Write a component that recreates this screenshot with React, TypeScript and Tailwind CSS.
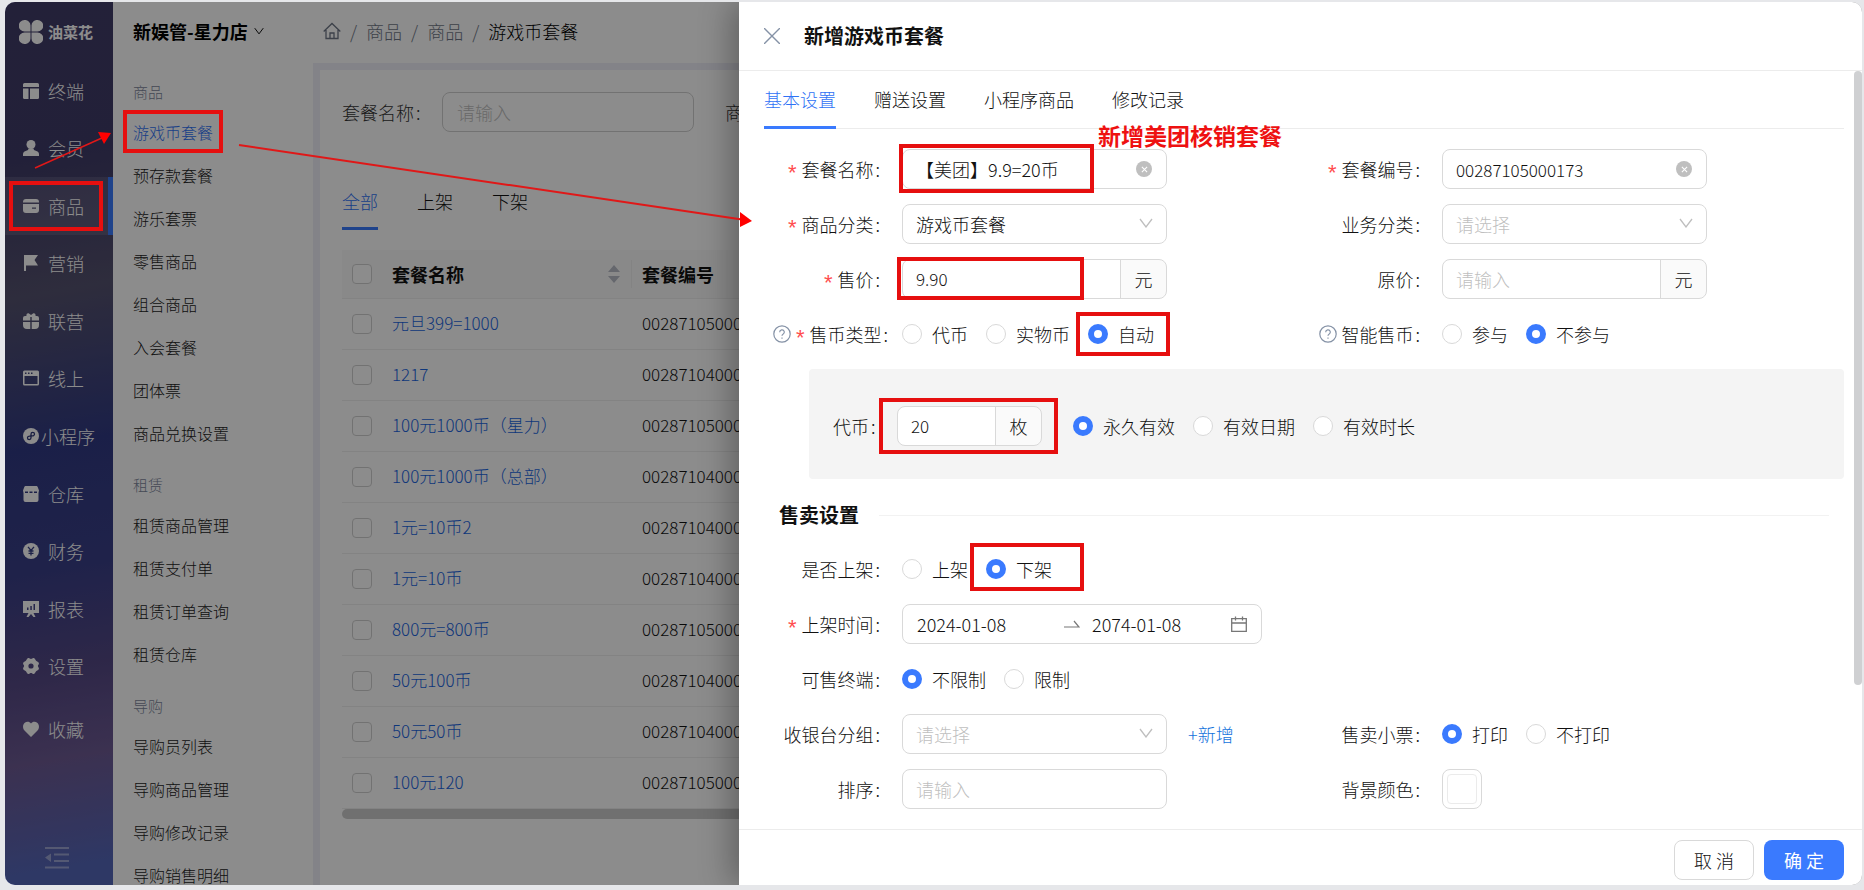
import type React from "react"
import { useState } from "react"

interface RadioGroupProps {
  name: string
  options: string[]
  selected: string
  marked?: string
  frameClass?: string
}

interface FieldProps {
  label: string
  htmlFor?: string
  required?: boolean
  help?: boolean
  children: React.ReactNode
}

const navItems = ["终端", "会员", "商品", "营销", "联营", "线上", "小程序", "仓库", "财务", "报表", "设置"]

const menuGroups = [
  {
    title: "商品",
    items: ["游戏币套餐", "预存款套餐", "游乐套票", "零售商品", "组合商品", "入会套餐", "团体票", "商品兑换设置"],
  },
  { title: "租赁", items: ["租赁商品管理", "租赁支付单", "租赁订单查询", "租赁仓库"] },
  { title: "导购", items: ["导购员列表", "导购商品管理", "导购修改记录", "导购销售明细"] },
]

const packages = [
  { name: "元旦399=1000", code: "00287105000172" },
  { name: "1217", code: "00287104000171" },
  { name: "100元1000币（星力）", code: "00287105000170" },
  { name: "100元1000币（总部）", code: "00287104000169" },
  { name: "1元=10币2", code: "00287104000168" },
  { name: "1元=10币", code: "00287104000167" },
  { name: "800元=800币", code: "00287105000166" },
  { name: "50元100币", code: "00287104000165" },
  { name: "50元50币", code: "00287104000164" },
  { name: "100元120", code: "00287105000163" },
]

const navIcons: Record<string, React.ReactNode> = {
  终端: (
    <>
      <path d="M1.5 0h13A1.5 1.5 0 0 1 16 1.500V4H0V1.500A1.500 1.500 0 0 1 1.500 0Z" />
      <path d="M0 5.500h5.500V16h-4A1.500 1.500 0 0 1 0 14.500Z" />
      <path d="M7 5.500h9v9a1.500 1.500 0 0 1-1.500 1.500H7Z" />
    </>
  ),
  会员: (
    <>
      <circle cx="8" cy="4.500" r="4.500" />
      <path d="M5.500 8.500h5l.5 1.500 3.500 1.500c1 .5 1.500 1.500 1.500 3v1.500H0v-1.500c0-1.500.5-2.500 1.500-3L5 10Z" />
    </>
  ),
  商品: (
    <>
      <path d="M3 1h10a3 3 0 0 1 3 3v.5H0V4a3 3 0 0 1 3-3Z" />
      <path d="M0 6h16v6a3 3 0 0 1-3 3H3a3 3 0 0 1-3-3Zm9 3.500v1.300h4V9.500Z" fillRule="evenodd" />
    </>
  ),
  营销: <path d="M1 0h14l-3.500 5L15 10.500H3V16H1Z" />,
  联营: (
    <>
      <path d="M3.500 3C3 1 4.500-.500 6 .5L8 2l2-1.500c1.500-1 3 .5 2.500 2.500H14a2 2 0 0 1 2 2v2.500H8.700V4H7.300v3.500H0V5a2 2 0 0 1 2-2Z" />
      <path d="M0 9h7.300v7H4a4 4 0 0 1-4-4ZM8.700 9H16v3a4 4 0 0 1-4 4H8.700Z" />
    </>
  ),
  线上: (
    <path
      fillRule="evenodd"
      d="M1.500.5h13A1.500 1.500 0 0 1 16 2v12a1.500 1.500 0 0 1-1.500 1.500h-13A1.500 1.500 0 0 1 0 14V2A1.500 1.500 0 0 1 1.500.5Zm0 5.500v8h13V6ZM2 2.500V4h1.500V2.500Zm3 0V4h1.500V2.500Zm3 0V4h1.500V2.500Z"
    />
  ),
  小程序: (
    <>
      <circle cx="8" cy="8" r="8" />
      <path
        d="M7.200 8.200c-1.600-.2-2.700.6-2.700 1.700 0 1 .8 1.700 1.800 1.700 1.100 0 1.700-.8 1.700-1.800V6.200c0-1 .6-1.800 1.700-1.800 1 0 1.800.7 1.800 1.700 0 1.100-1.100 1.900-2.700 1.700"
        fill="none"
        stroke="#2f3878"
        strokeWidth="1.300"
        strokeLinecap="round"
      />
    </>
  ),
  仓库: (
    <path
      fillRule="evenodd"
      d="M3 0h10c1 0 1.500.5 1.800 1.200L16 4.500 15.500 7v7a2 2 0 0 1-2 2h-11a2 2 0 0 1-2-2V7L0 4.500l1.200-3.300C1.500.5 2 0 3 0ZM2 5.500v1.400h3V5.500Zm4.500 0v1.400h3V5.500Zm4.500 0v1.400h3V5.500Z"
    />
  ),
  财务: (
    <>
      <circle cx="8" cy="8" r="8" />
      <path d="M5 3.800 8 7.500l3-3.700M8 7.500v5M5.500 8h5M5.500 10.300h5" fill="none" stroke="#353f84" strokeWidth="1.300" />
    </>
  ),
  报表: (
    <>
      <path fillRule="evenodd" d="M0 0h16v12H0ZM4 6.500V9h1.500V6.500ZM7.300 5v4h1.500V5ZM10.500 3v6H12V3Z" />
      <path d="M5.500 12 3.500 16h2L8 13l2.500 3h2l-2-4Z" />
    </>
  ),
  设置: (
    <path
      fillRule="evenodd"
      d="M5.200 0c1.100-.2 1.700.9 2.800.9S9.700-.2 10.800 0c1.400.4 1.500 1.800 2.300 2.700.8.800 2.500 1 2.800 2.500.3 1.200-1 1.800-1 2.800s1.300 1.600 1 2.800c-.3 1.500-2 1.700-2.800 2.500-.8.900-.9 2.300-2.300 2.700-1.100.2-1.700-.9-2.800-.9s-1.700 1.100-2.800.9c-1.400-.4-1.500-1.800-2.300-2.700C2.100 12.500.4 12.300.1 10.800c-.3-1.200 1-1.800 1-2.800S-.2 6.400.1 5.200C.4 3.700 2.100 3.500 2.900 2.700 3.700 1.800 3.800.4 5.200 0ZM8 5.400a2.600 2.600 0 1 0 0 5.200 2.600 2.600 0 0 0 0-5.200Z"
    />
  ),
  收藏: <path d="M8 16 1.500 9.500C-.5 7.300-.4 3.800 1.500 2 3.500 0 6.500.2 8 2.500 9.500.2 12.500 0 14.500 2c1.900 1.800 2 5.300 0 7.500Z" />,
}

function NavIcon({ name }: { name: string }) {
  return (
    <svg viewBox="0 0 16 16" className="size-4 shrink-0" fill="currentColor" aria-hidden="true">
      {navIcons[name]}
    </svg>
  )
}

function ChevronDown({ className }: { className: string }) {
  return (
    <svg viewBox="0 0 14 10" className={className} fill="none" stroke="currentColor" strokeWidth="1.3" aria-hidden="true">
      <path d="M1 1l6 8 6-8" />
    </svg>
  )
}

// Red frame that sits above the mask and the drawer
function Frame({ className }: { className: string }) {
  return <span className={`pointer-events-none absolute z-40 border-4 border-[#e60f0f] ${className}`} />
}

function RadioGroup({ name, options, selected, marked, frameClass }: RadioGroupProps) {
  const [value, setValue] = useState(selected)

  return (
    <div className="flex items-center gap-[18px]">
      {options.map((option) => (
        <label key={option} className="relative flex items-center gap-[10px] whitespace-nowrap">
          <input
            type="radio"
            name={name}
            checked={value === option}
            onChange={() => setValue(option)}
            className="size-5 shrink-0 appearance-none rounded-full border border-[#d9d9d9] bg-white checked:border-[6px] checked:border-[#3a7afe]"
          />
          {option}
          {marked === option && <Frame className={frameClass ?? ""} />}
        </label>
      ))}
    </div>
  )
}

function Field({ label, htmlFor, required, help, children }: FieldProps) {
  return (
    <div className="flex h-10 items-center">
      <div className={`flex w-[138px] shrink-0 items-center justify-end gap-[5px] ${help && required ? "pr-[14px]" : "pr-[22px]"}`}>
        {help && (
          <svg viewBox="0 0 18 18" className="size-[18px] shrink-0 text-[#8592a6]" fill="none" stroke="currentColor" strokeWidth="1.2" aria-hidden="true">
            <circle cx="9" cy="9" r="8.2" />
            <path d="M6.700 7.200a2.300 2.300 0 1 1 3.300 2c-.7.4-1 .8-1 1.600M9 12.500v1.200" />
          </svg>
        )}
        {required && <span className="pt-2 font-['Liberation_Sans'] text-[22px] leading-5 text-[#ff4d4f]">*</span>}
        <label htmlFor={htmlFor} className="whitespace-nowrap">
          {label}
          <span className="ml-[2px]">:</span>
        </label>
      </div>
      {children}
    </div>
  )
}

function TextInput({ id, value, className }: { id: string; value: string; className?: string }) {
  return (
    <div className="relative w-[265px]">
      <input
        id={id}
        defaultValue={value}
        className={`h-10 w-full rounded-lg border border-[#d9d9d9] bg-white pl-[13px] pr-9 ${className ?? ""}`}
      />
      <button aria-label="清除" className="absolute right-[15px] top-3 flex size-4 items-center justify-center rounded-full bg-[#bfbfbf] text-white">
        <svg viewBox="0 0 8 8" className="size-[7px]" stroke="currentColor" strokeWidth="1.2">
          <path d="M1 1l6 6M7 1L1 7" />
        </svg>
      </button>
    </div>
  )
}

function SelectInput({ id, value, placeholder }: { id: string; value?: string; placeholder?: boolean }) {
  return (
    <div className="relative w-[265px]">
      <select
        id={id}
        className={`h-10 w-full appearance-none rounded-lg border border-[#d9d9d9] bg-white px-[13px] ${
          placeholder ? "text-[#bfbfbf]" : ""
        }`}
      >
        <option>{value ?? "请选择"}</option>
      </select>
      <ChevronDown className="pointer-events-none absolute right-[14px] top-[14px] h-[10px] w-[14px] text-[#bfbfbf]" />
    </div>
  )
}

function UnitInput({ id, value, unit, className }: { id: string; value?: string; unit: string; className: string }) {
  return (
    <div className={`flex h-10 overflow-hidden rounded-lg border border-[#d9d9d9] bg-white ${className}`}>
      <input
        id={id}
        defaultValue={value}
        placeholder="请输入"
        className={`min-w-0 flex-1 pl-[13px] placeholder:text-[#bfbfbf] ${value ? "text-[17px]" : ""}`}
      />
      <span className="flex w-[46px] items-center justify-center border-l border-[#d9d9d9] bg-black/2">{unit}</span>
    </div>
  )
}

function Sidebar() {
  return (
    <aside className="flex w-[108px] shrink-0 flex-col bg-[linear-gradient(170deg,#413c69_0%,#3f3b68_18%,#55526f_33%,#313a83_50%,#3a3f88_64%,#544884_75%,#6d5a93_85%,#5566b8_97%)] text-white">
      <div className="flex h-[60px] items-center gap-[5px] pl-[14px]">
        <svg viewBox="0 0 24 24" className="size-6" fill="currentColor" aria-hidden="true">
          <path d="M5.500 0a5.500 5.500 0 0 1 6 5.500v6h-6a5.700 5.700 0 1 1 0-11.500Z" />
          <path d="M18.500 0a5.500 5.500 0 0 0-6 5.500v6h6a5.700 5.700 0 1 0 0-11.500Z" />
          <path d="M5.500 24a5.500 5.500 0 0 0 6-5.500v-6h-6a5.700 5.700 0 1 0 0 11.500Z" />
          <path d="M18.500 24a5.500 5.500 0 0 1-6-5.500v-6h6a5.700 5.700 0 1 1 0 11.500Z" />
        </svg>
        <span className="text-[15px] font-bold">油菜花</span>
      </div>
      <nav className="grid h-[633px] shrink-0 auto-rows-fr">
        {navItems.map((item) => (
          <a
            key={item}
            href="#"
            className={`relative flex items-center whitespace-nowrap pl-[18px] ${item.length > 2 ? "gap-[2px]" : "gap-[9px]"} ${
              item === "商品" ? "border-r-[5px] border-[#3a7afe] bg-white/10" : ""
            }`}
          >
            <NavIcon name={item} />
            {item}
            {item === "商品" && <Frame className="inset-y-1 left-1 right-[5px]" />}
          </a>
        ))}
      </nav>
      <a href="#" className="flex h-[68px] items-center gap-[9px] pl-[18px]">
        <NavIcon name="收藏" />
        收藏
      </a>
      <button aria-label="收起菜单" className="mb-4 mt-auto flex justify-center pr-1 text-white/40">
        <svg viewBox="0 0 24 22" className="h-[22px] w-6" fill="currentColor" aria-hidden="true">
          <path d="M0 0h24v2H0ZM9 6.500h15v2H9ZM9 13h15v2H9ZM0 19.500h24v2H0ZM0 10.500 6 6.500v8.500Z" />
        </svg>
      </button>
    </aside>
  )
}

function SubMenu() {
  return (
    <nav className="w-[200px] shrink-0 overflow-hidden bg-white pl-5 pt-3 text-base text-[#222]">
      {menuGroups.map((group) => (
        <div key={group.title} className="mb-[14px]">
          <h3 className="flex h-[35px] items-center text-[15px] text-[#7d879c]">{group.title}</h3>
          {group.items.map((item) => (
            <a key={item} href="#" className={`relative flex h-[43px] items-center ${item === "游戏币套餐" ? "text-[#2f72f5]" : ""}`}>
              {item}
              {item === "游戏币套餐" && <Frame className="inset-y-0 -left-[10px] w-[100px]" />}
            </a>
          ))}
        </div>
      ))}
    </nav>
  )
}

function PackageList() {
  return (
    <main className="ml-[7px] mt-[7px] min-w-0 flex-1 overflow-hidden bg-white pl-[22px] pt-[22px]">
      <div className="flex items-center">
        <label htmlFor="search-name" className="w-[100px] text-[#333]">
          套餐名称
          <span className="ml-[2px]">:</span>
        </label>
        <input
          id="search-name"
          placeholder="请输入"
          className="h-10 w-[252px] rounded-lg border border-[#d0d0d0] px-[14px] placeholder:text-[#bfbfbf]"
        />
        <label htmlFor="search-type" className="ml-[31px] text-[#333]">
          商品
        </label>
        <input id="search-type" className="ml-5 h-10 w-[252px] rounded-lg border border-[#d0d0d0]" />
      </div>
      <div className="mt-[50px] flex gap-[39px]">
        {["全部", "上架", "下架"].map((tab, i) => (
          <button
            key={tab}
            className={`h-12 border-b-[3px] pb-2 ${i === 0 ? "border-[#3a7afe] text-[#2f72f5]" : "border-transparent"}`}
          >
            {tab}
          </button>
        ))}
      </div>
      <table className="mt-5 w-full table-fixed border-collapse text-left">
        <thead>
          <tr className="h-[48px] border-b border-[#eee] bg-[#fafafa]">
            <th className="w-[50px] pl-[10px]">
              <input type="checkbox" aria-label="全选" className="block size-5 appearance-none rounded border border-[#d0d0d0] bg-white" />
            </th>
            <th className="w-[240px]">
              <div className="flex items-center justify-between border-r border-[#eee] pr-[11px]">
                套餐名称
                <svg viewBox="0 0 12 18" className="h-[18px] w-3 text-[#b8bcc6]" fill="currentColor" aria-hidden="true">
                  <path d="M6 0l6 7H0ZM6 18l6-7H0Z" />
                </svg>
              </div>
            </th>
            <th className="pl-[10px]">套餐编号</th>
          </tr>
        </thead>
        <tbody className="text-[17px]">
          {packages.map((item) => (
            <tr key={item.code} className="h-[51px] border-b border-[#eee]">
              <td className="pl-[10px]">
                <input
                  type="checkbox"
                  aria-label={item.name}
                  className="block size-5 appearance-none rounded border border-[#d0d0d0] bg-white"
                />
              </td>
              <td>
                <a href="#" className="whitespace-nowrap text-[#1a64e0]">
                  {item.name}
                </a>
              </td>
              <td className="pl-[10px]">{item.code}</td>
            </tr>
          ))}
        </tbody>
      </table>
      <div className="h-[10px] rounded-l-full bg-[#cdcdcd]" />
    </main>
  )
}

function Drawer() {
  const [activeTab, setActiveTab] = useState("基本设置")

  return (
    <section className="absolute inset-y-0 right-0 z-20 flex w-[1123px] max-w-full flex-col bg-white shadow-[-8px_0_30px_rgba(0,0,0,0.3)]">
      <header className="flex h-[69px] shrink-0 items-center gap-6 border-b border-[#ececec] pl-[25px]">
        <button aria-label="关闭" className="text-[#8592a6]">
          <svg viewBox="0 0 16 16" className="size-4" stroke="currentColor" strokeWidth="1.4">
            <path d="M0 0l16 16M16 0L0 16" />
          </svg>
        </button>
        <h2 className="text-xl font-bold">新增游戏币套餐</h2>
      </header>

      <div className="relative min-h-0 flex-1">
        <div className="h-full overflow-y-auto pl-[25px] pr-[18px] [scrollbar-width:none]">
          <div className="relative flex gap-[38px] border-b border-[#ececec]">
            {["基本设置", "赠送设置", "小程序商品", "修改记录"].map((tab) => (
              <button
                key={tab}
                onClick={() => setActiveTab(tab)}
                className={`-mb-px h-[58px] border-b-[3px] ${
                  activeTab === tab ? "border-[#3a7afe] text-[#2f72f5]" : "border-transparent"
                }`}
              >
                {tab}
              </button>
            ))}
            <p className="absolute left-[334px] top-[47px] z-40 whitespace-nowrap text-[23px] leading-[34px] font-bold text-[#ee1111]">
              新增美团核销套餐
            </p>
          </div>

          <div className="mt-5 grid grid-cols-2 gap-y-[15px]">
            <div className="relative">
              <Field label="套餐名称" htmlFor="name" required>
                <TextInput id="name" value="【美团】9.9=20币" />
              </Field>
              <Frame className="-top-[5px] left-[135px] h-[49px] w-[195px]" />
            </div>
            <Field label="套餐编号" htmlFor="code" required>
              <TextInput id="code" value="00287105000173" className="text-[17px]" />
            </Field>
            <Field label="商品分类" htmlFor="category" required>
              <SelectInput id="category" value="游戏币套餐" />
            </Field>
            <Field label="业务分类" htmlFor="business">
              <SelectInput id="business" placeholder />
            </Field>
            <div className="relative">
              <Field label="售价" htmlFor="price" required>
                <UnitInput id="price" value="9.90" unit="元" className="w-[265px]" />
              </Field>
              <Frame className="-top-[2px] left-[133px] h-[43px] w-[187px]" />
            </div>
            <Field label="原价" htmlFor="original-price">
              <UnitInput id="original-price" unit="元" className="w-[265px]" />
            </Field>
            <Field label="售币类型" required help>
              <RadioGroup
                name="coin-type"
                options={["代币", "实物币", "自动"]}
                selected="自动"
                marked="自动"
                frameClass="-top-2 -bottom-2 -left-3 -right-4"
              />
            </Field>
            <Field label="智能售币" help>
              <RadioGroup name="smart" options={["参与", "不参与"]} selected="不参与" />
            </Field>
          </div>

          <div className="ml-[45px] mt-[15px] flex h-[110px] items-center rounded bg-[#f4f4f4] pl-6 pt-1">
            <label htmlFor="coins" className="w-16">
              代币
              <span className="ml-[2px]">:</span>
            </label>
            <div className="relative mr-[31px]">
              <UnitInput id="coins" value="20" unit="枚" className="w-[145px]" />
              <Frame className="-inset-y-2 -left-[18px] -right-4" />
            </div>
            <RadioGroup name="validity" options={["永久有效", "有效日期", "有效时长"]} selected="永久有效" />
          </div>

          <div className="mt-5 flex h-8 items-center gap-5 px-[15px]">
            <h3 className="text-xl font-bold">售卖设置</h3>
            <hr className="flex-1 border-[#f2f2f2]" />
          </div>

          <div className="mt-[18px] grid grid-cols-2 gap-y-[15px] pb-4">
            <div className="col-span-2">
              <Field label="是否上架">
                <RadioGroup
                  name="on-shelf"
                  options={["上架", "下架"]}
                  selected="下架"
                  marked="下架"
                  frameClass="-top-3 -bottom-2 -left-4 -right-8"
                />
              </Field>
            </div>
            <div className="col-span-2">
              <Field label="上架时间" htmlFor="start-date" required>
                <div className="flex h-10 w-[360px] items-center rounded-lg border border-[#d9d9d9] px-[14px]">
                  <input id="start-date" defaultValue="2024-01-08" className="w-[147px]" />
                  <svg viewBox="0 0 16 8" className="mr-3 h-2 w-4 shrink-0 text-[#777]" fill="none" stroke="currentColor" strokeWidth="1.2" aria-hidden="true">
                    <path d="M0 7h15l-5-6" />
                  </svg>
                  <input aria-label="结束日期" defaultValue="2074-01-08" className="min-w-0 flex-1" />
                  <svg viewBox="0 0 16 16" className="size-4 shrink-0 text-[#777]" fill="none" stroke="currentColor" strokeWidth="1.3" aria-hidden="true">
                    <path d="M.7 2.700h14.600v12.600H.7ZM.7 7h14.600M4.500.500v4M11.500.500v4" />
                  </svg>
                </div>
              </Field>
            </div>
            <div className="col-span-2">
              <Field label="可售终端">
                <RadioGroup name="terminal" options={["不限制", "限制"]} selected="不限制" />
              </Field>
            </div>
            <Field label="收银台分组" htmlFor="group">
              <SelectInput id="group" placeholder />
              <button className="ml-[21px] whitespace-nowrap text-[#1473dc]">+新增</button>
            </Field>
            <Field label="售卖小票">
              <RadioGroup name="receipt" options={["打印", "不打印"]} selected="打印" />
            </Field>
            <Field label="排序" htmlFor="sort">
              <input
                id="sort"
                placeholder="请输入"
                className="h-10 w-[265px] rounded-lg border border-[#d9d9d9] px-[13px] placeholder:text-[#bfbfbf]"
              />
            </Field>
            <Field label="背景颜色" htmlFor="bg-color">
              <button id="bg-color" className="size-10 rounded-lg border border-[#d9d9d9] p-1">
                <span className="block size-full rounded border border-[#ebebeb]" />
              </button>
            </Field>
          </div>
        </div>
        <div className="absolute right-0 top-0 h-[81%] w-2 rounded-full bg-[#cfd0d2]" />
      </div>

      <footer className="flex shrink-0 justify-end gap-[10px] border-t border-[#ececec] px-[18px] pb-[5px] pt-[10px]">
        <button className="h-10 w-20 rounded-lg border border-[#d9d9d9]">取 消</button>
        <button className="h-10 w-20 rounded-lg bg-[#3a7afe] font-normal text-white">确 定</button>
      </footer>
    </section>
  )
}

export default function App() {
  return (
    <div className="h-screen bg-[#e6e7ea] pb-[5px] pl-[5px] pr-[2px] pt-[2px] font-['Noto_Sans_CJK_SC',sans-serif] text-lg font-light text-[#111]">
      <div className="relative flex h-full overflow-hidden rounded-[10px] bg-[#eeeff8]">
        <Sidebar />
        <div className="flex min-w-0 flex-1 flex-col">
          <header className="flex h-[61px] shrink-0 items-center bg-white pb-[3px] pl-5">
            <button className="flex w-[190px] items-center gap-[6px] font-bold text-black">
              新娱管-星力店
              <ChevronDown className="h-2 w-[10px]" />
            </button>
            <nav className="flex items-center gap-[9px] whitespace-nowrap text-[#6f7787]">
              <svg viewBox="0 0 18 18" className="size-[18px]" fill="none" stroke="currentColor" strokeWidth="1.3" aria-hidden="true">
                <path d="M.7 9.500 9 1.500l8.300 8M3 8v8.500h12V8M7 16v-5h4v5" />
              </svg>
              <span>/</span>
              <a href="#">商品</a>
              <span>/</span>
              <a href="#">商品</a>
              <span>/</span>
              <span className="text-black">游戏币套餐</span>
            </nav>
          </header>
          <div className="flex min-h-0 flex-1">
            <SubMenu />
            <PackageList />
          </div>
        </div>

        <div className="absolute inset-0 z-10 bg-black/45" />
        <Drawer />

        <svg className="pointer-events-none absolute left-0 top-0 z-40 h-[240px] w-[750px]" fill="#ff0000" stroke="#e01818" aria-hidden="true">
          <path d="M30 166 98 135.500" strokeWidth="1.500" />
          <path d="M106 131 93 130l6 12Z" stroke="none" />
          <path d="M234 143 737 217.500" strokeWidth="2" />
          <path d="M747 219 735 210v15Z" stroke="none" />
        </svg>
      </div>
    </div>
  )
}
